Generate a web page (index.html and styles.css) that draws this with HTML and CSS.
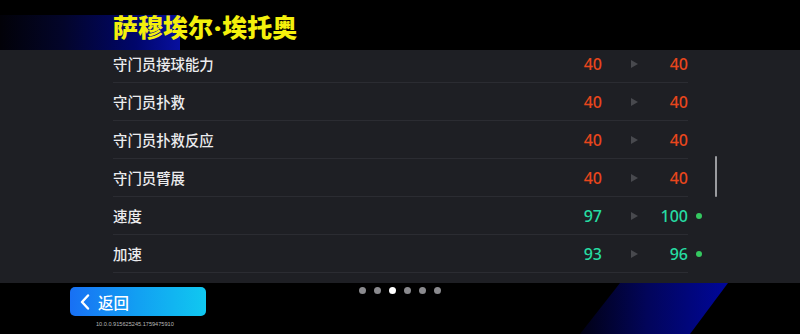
FILE: index.html
```html
<!DOCTYPE html>
<html lang="zh">
<head>
<meta charset="utf-8">
<link rel="stylesheet" href="styles.css">
</head>
<body>
<div class="screen">
  <div class="deco-top"></div>
  <div class="deco-bottom"></div>
  <header class="header">
    <h1 class="title">萨穆埃尔<span class="mid">·</span>埃托奥</h1>
  </header>
  <section class="panel">
    <div class="list">
      <div class="row"><div class="cells"><span class="label">守门员接球能力</span><span class="v1 bad">40</span><span class="arrow"></span><span class="v2 bad">40</span></div></div>
      <div class="row"><div class="cells"><span class="label">守门员扑救</span><span class="v1 bad">40</span><span class="arrow"></span><span class="v2 bad">40</span></div></div>
      <div class="row"><div class="cells"><span class="label">守门员扑救反应</span><span class="v1 bad">40</span><span class="arrow"></span><span class="v2 bad">40</span></div></div>
      <div class="row"><div class="cells"><span class="label">守门员臂展</span><span class="v1 bad">40</span><span class="arrow"></span><span class="v2 bad">40</span></div></div>
      <div class="row"><div class="cells"><span class="label">速度</span><span class="v1 good">97</span><span class="arrow"></span><span class="v2 good">100</span></div><span class="dot"></span></div>
      <div class="row"><div class="cells"><span class="label">加速</span><span class="v1 good">93</span><span class="arrow"></span><span class="v2 good">96</span></div><span class="dot"></span></div>
      <div class="row"><div class="cells"><span class="label"></span></div></div>
    </div>
    <div class="scrollbar"></div>
  </section>
  <footer class="footer">
    <div class="left">
      <button class="back">
        <svg class="chev" width="10" height="16" viewBox="0 0 10 16"><path d="M8 1.5 L2 8 L8 14.5" fill="none" stroke="#fff" stroke-width="2.4" stroke-linecap="round" stroke-linejoin="round"/></svg>
        <span>返回</span>
      </button>
      <div class="ver">10.0.0.915625245.1759475910</div>
    </div>
    <div class="pager">
      <span class="pd"></span><span class="pd"></span><span class="pd on"></span><span class="pd"></span><span class="pd"></span><span class="pd"></span>
    </div>
    <div class="right"></div>
  </footer>
</div>
</body>
</html>
```
FILE: styles.css
```css
* { box-sizing: border-box; }
html, body { margin: 0; padding: 0; background: #000; }
.screen {
  position: relative;
  width: 800px;
  height: 334px;
  overflow: hidden;
  background: #000;
  font-family: "Noto Sans CJK SC", "Noto Sans", sans-serif;
}
.deco-top {
  position: absolute;
  left: 0;
  top: 15px;
  width: 180px;
  height: 35px;
  background: linear-gradient(90deg, #020208 0%, #03052a 35%, #00066a 75%, #0810a0 100%);
}
.deco-bottom {
  position: absolute;
  left: 580px;
  top: 283px;
  width: 148px;
  height: 51px;
  background: linear-gradient(90deg, #010114 0%, #02055a 45%, #00079a 100%);
  clip-path: polygon(40px 0, 148px 0, 110px 100%, 0 100%);
}
.header {
  position: relative;
  height: 50px;
  display: flex;
  align-items: center;
  padding: 3px 0 0 113px;
}
.title {
  margin: 0;
  font-size: 25px;
  font-weight: 900;
  color: #f4f00c;
  line-height: 1;
}
.mid {
  font-family: "Noto Sans", sans-serif;
  font-weight: 900;
  margin: 0 1px;
}
.panel {
  position: relative;
  height: 233px;
  background: #1e1f24;
  overflow: hidden;
}
.list {
  margin-top: -5px;
  padding-left: 113px;
}
.row {
  display: flex;
  align-items: center;
  height: 38px;
}
.cells {
  width: 575px;
  height: 38px;
  display: flex;
  align-items: center;
  border-bottom: 1px solid #2b2c32;
}
.label {
  flex: 1;
  color: #ececee;
  font-size: 14.4px;
  font-weight: 500;
  padding-bottom: 1px;
}
.v1, .v2 {
  font-family: "Noto Sans", sans-serif;
  font-size: 16px;
  font-weight: 500;
  display: flex;
  justify-content: flex-end;
}
.v1 { width: 40px; }
.v2 { width: 22px; }
.bad { color: #e8461c; }
.good { color: #26dca2; }
.arrow {
  width: 64px;
  display: flex;
  justify-content: center;
}
.arrow::before {
  content: "";
  border-left: 7px solid #48494e;
  border-top: 4px solid transparent;
  border-bottom: 4px solid transparent;
}
.dot {
  width: 6px;
  height: 6px;
  border-radius: 50%;
  background: #35c860;
  margin-left: 8px;
}
.scrollbar {
  position: absolute;
  left: 715px;
  top: 106px;
  width: 2px;
  height: 41px;
  background: #9a9b9f;
  border-radius: 1px;
}
.footer {
  position: relative;
  height: 51px;
  display: grid;
  grid-template-columns: 1fr auto 1fr;
}
.left {
  padding: 4px 0 0 70px;
}
.back {
  display: flex;
  align-items: center;
  width: 136px;
  height: 29px;
  padding: 0 0 0 10px;
  border: 0;
  border-radius: 5px;
  background: linear-gradient(90deg, #1870f4 0%, #12a0f2 50%, #10c8f0 100%);
  color: #fff;
  font-family: "Noto Sans CJK SC", sans-serif;
  font-size: 15.5px;
  font-weight: 500;
  gap: 8px;
}
.chev { display: block; }
.ver {
  margin: 6px 0 0 26px;
  font-family: "Liberation Sans", sans-serif;
  font-size: 5.6px;
  color: #b8b8b8;
  line-height: 1;
}
.pager {
  display: flex;
  gap: 8px;
  padding-top: 4px;
}
.pd {
  width: 7px;
  height: 7px;
  border-radius: 50%;
  background: #8a8a8e;
}
.pd.on { background: #fff; }
```
